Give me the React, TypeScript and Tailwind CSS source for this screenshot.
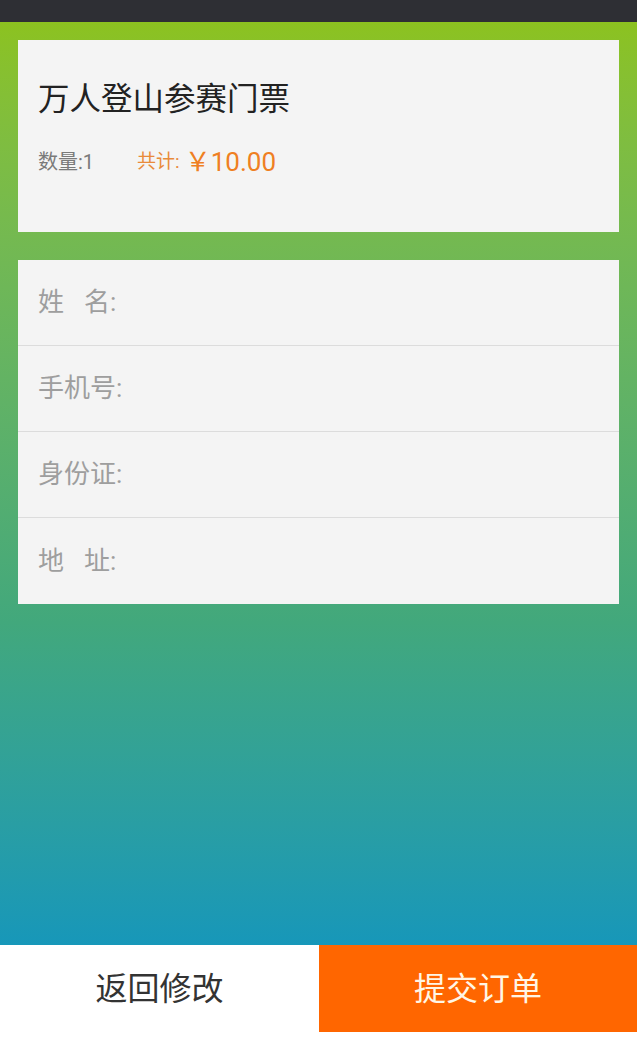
import React from "react";

const font = "font-['Roboto','Noto_Sans_CJK_SC',sans-serif]";

export default function App() {
  const rows: [string, string, boolean][] = [
    ["姓", "名:", true],
    ["手机号:", "", false],
    ["身份证:", "", false],
    ["地", "址:", true],
  ];
  return (
    <div className={`w-[637px] min-h-[1050px] bg-white ${font}`}>
      <div className="h-[22px] bg-[#2e2f34]" />
      <div className="h-[923px] bg-linear-to-b from-[#8cc21f] via-[#42a87c] via-65% to-[#1797b9] px-[18px] pt-[18px]">
        <div className="h-[192px] bg-[#f4f4f4] pl-[20px] pt-[40px]">
          <div className="h-[40px] leading-[40px] text-[31.5px] text-[#222]">万人登山参赛门票</div>
          <div className="mt-[27px] flex h-[30px] items-center">
            <span className="text-[20px] text-[#7a7a7a]">数量:1</span>
            <span className="ml-[43px] text-[19px] text-[#e98a3a]">共计:</span>
            <span className="ml-[5px] text-[26px] text-[#ef7f22]">￥10.00</span>
          </div>
        </div>
        <div className="mt-[28px] bg-[#f4f4f4] flex flex-col">
          {rows.map(([a, b, split], i) => (
            <div
              key={i}
              className={`h-[86px] flex items-center pl-[20px] text-[26px] text-[#9e9e9e] ${i < 3 ? "border-b border-[#dcdcdc]" : ""}`}
            >
              <span>{a}</span>
              {split && <span className="ml-[20px]">{b}</span>}
            </div>
          ))}
        </div>
      </div>
      <div className="flex h-[87px]">
        <div className="w-[319px] bg-white flex items-center justify-center text-[32px] text-[#333]">返回修改</div>
        <div className="flex-1 bg-[#ff6600] flex items-center justify-center text-[32px] text-[#fff6e6]">提交订单</div>
      </div>
    </div>
  );
}
